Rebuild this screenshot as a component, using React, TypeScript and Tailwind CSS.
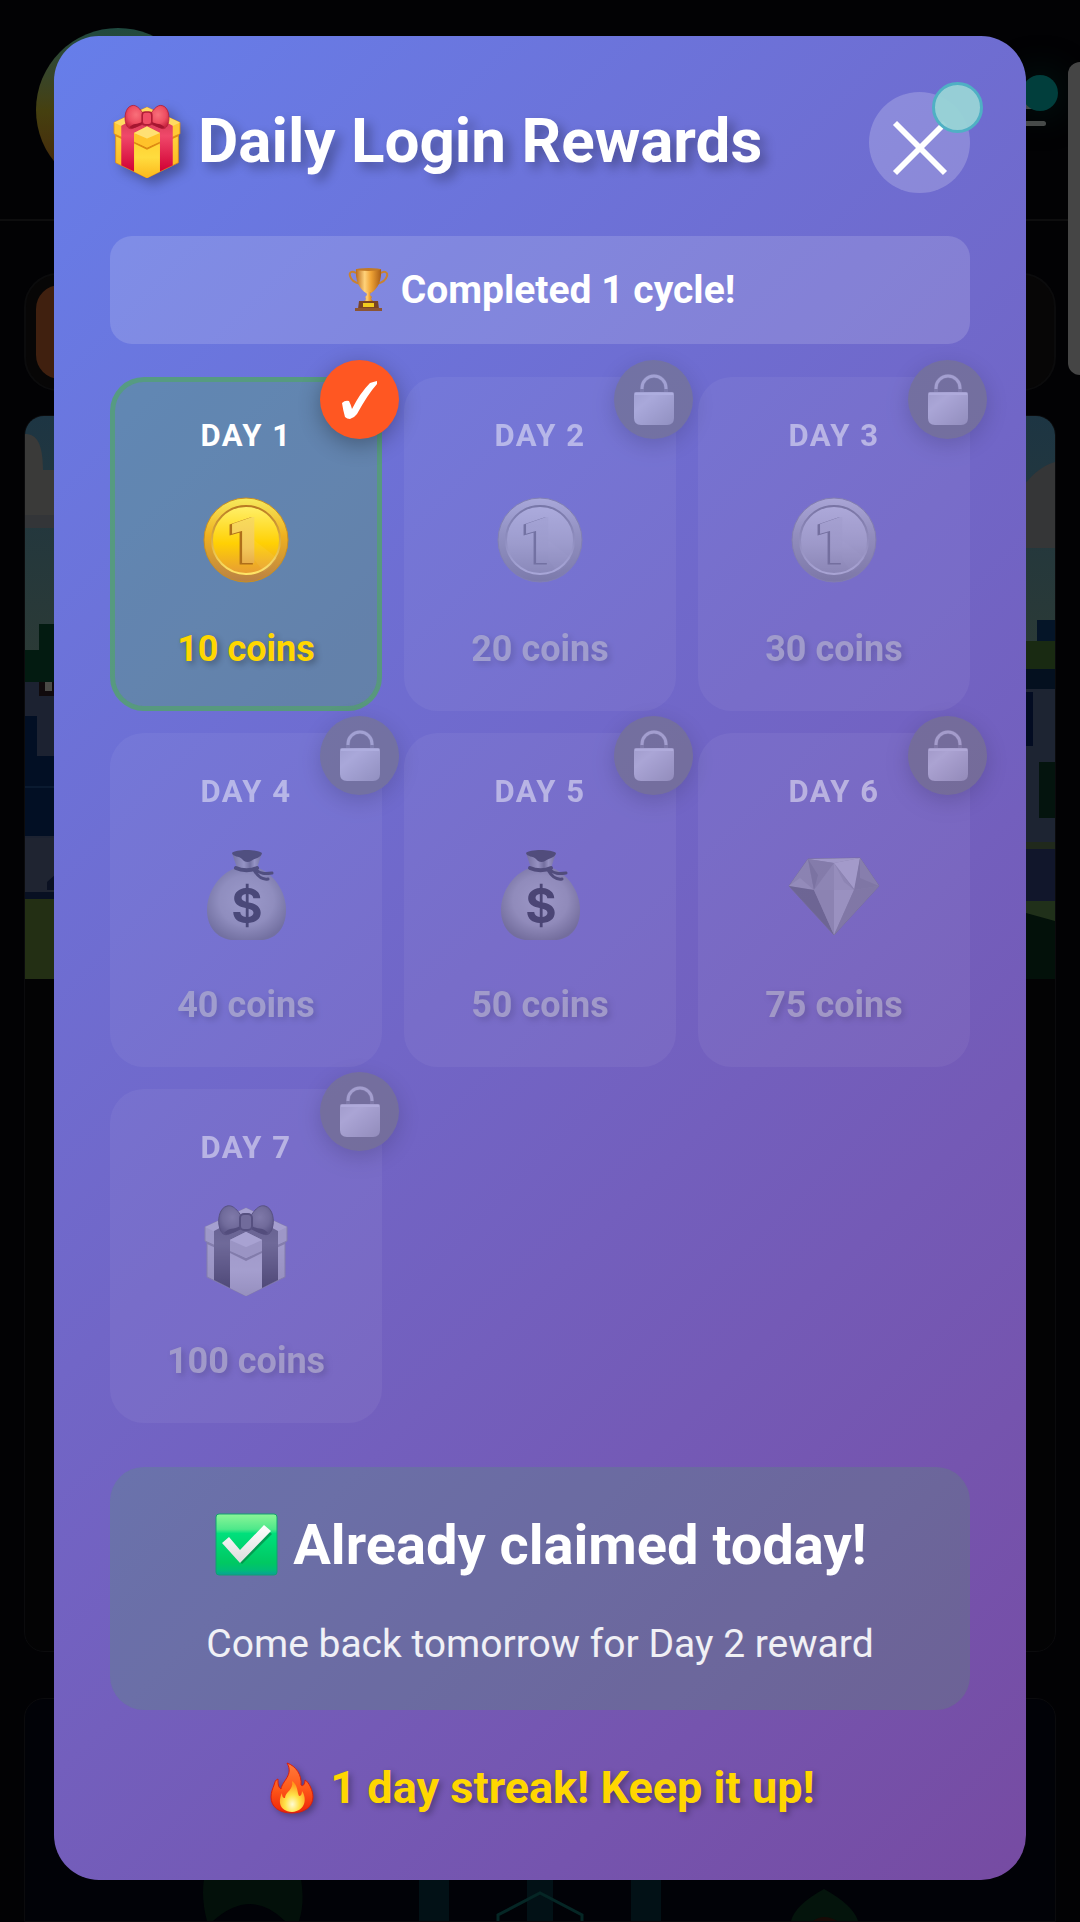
import { X } from "lucide-react";
import type { ReactNode } from "react";

type RewardIcon = "coin" | "bag" | "diamond" | "gift";

interface Reward {
    day: number;
    coins: number;
    icon: RewardIcon;
    claimed: boolean;
}

const REWARDS: Reward[] = [
    { day: 1, coins: 10, icon: "coin", claimed: true },
    { day: 2, coins: 20, icon: "coin", claimed: false },
    { day: 3, coins: 30, icon: "coin", claimed: false },
    { day: 4, coins: 40, icon: "bag", claimed: false },
    { day: 5, coins: 50, icon: "bag", claimed: false },
    { day: 6, coins: 75, icon: "diamond", claimed: false },
    { day: 7, coins: 100, icon: "gift", claimed: false },
];

function GiftIcon({ className }: { className: string }) {
    return (
        <svg viewBox="0 0 92 92" className={className} aria-hidden="true">
            <defs>
                <linearGradient id="giftBox" x1="0" y1="0" x2="0" y2="1">
                    <stop offset="0" stopColor="#ffe04a" />
                    <stop offset="1" stopColor="#fbb118" />
                </linearGradient>
                <linearGradient id="giftFront" x1="0" y1="0" x2="0" y2="1">
                    <stop offset="0" stopColor="#ffc928" />
                    <stop offset="0.6" stopColor="#ffdc3e" />
                    <stop offset="1" stopColor="#fcb81c" />
                </linearGradient>
                <linearGradient id="giftRibbon" x1="0" y1="0" x2="0" y2="1">
                    <stop offset="0" stopColor="#c9364a" />
                    <stop offset="0.4" stopColor="#f0486a" />
                    <stop offset="1" stopColor="#d10034" />
                </linearGradient>
                <radialGradient id="giftBow" cx="0.5" cy="0.4" r="0.6">
                    <stop offset="0" stopColor="#f9707a" />
                    <stop offset="0.6" stopColor="#ee4e62" />
                    <stop offset="1" stopColor="#c9243f" />
                </radialGradient>
            </defs>
            <path d="M7 36V73L46 92L85 73V36L46 20Z" fill="url(#giftBox)" stroke="#dd8a14" strokeWidth="1" />
            <path d="M7 40L46 58L85 40V36L46 20L7 36Z" fill="#e38c12" />
            <path d="M5 23L46 4L87 23V37L46 56L5 37Z" fill="#ffc935" stroke="#e08e16" strokeWidth="1" />
            <path d="M5 23L46 4L87 23L46 43Z" fill="#ffdb63" />
            <path d="M14 27L46 10L78 27V76L62 84V36L46 28L30 36V84L14 76Z" fill="url(#giftRibbon)" />
            <path d="M30 36L46 28L62 36V84L46 92L30 84Z" fill="url(#giftFront)" />
            <path d="M30 49L46 57L62 49V46L46 54L30 46Z" fill="#dd8a12" />
            <path d="M30 36L46 43L62 36V47L46 54L30 47Z" fill="#ffc22a" />
            <path d="M30 36L46 28L62 36L46 43Z" fill="#ffe074" />
            <path d="M46 20C40 9 34 0 27 2C19 4 17 17 20 25C22 31 26 32 31 29C37 26 40 27 46 20Z" fill="url(#giftBow)" stroke="#b01c36" strokeWidth="1" />
            <path d="M46 20C52 9 58 0 65 2C73 4 75 17 72 25C70 31 66 32 61 29C55 26 52 27 46 20Z" fill="url(#giftBow)" stroke="#b01c36" strokeWidth="1" />
            <path d="M24 29C29 23 34 26 40 22V25C35 28 29 32 24 29Z" fill="#a51530" />
            <path d="M68 29C63 23 58 26 52 22V25C57 28 63 32 68 29Z" fill="#a51530" />
            <rect x="40" y="10" width="12" height="16" rx="4" fill="#f04d66" stroke="#b01c36" strokeWidth="2" />
        </svg>
    );
}

function CoinIcon({ className }: { className: string }) {
    return (
        <svg viewBox="0 0 92 92" className={className} aria-hidden="true">
            <defs>
                <linearGradient id="coinRim" x1="0" y1="0" x2="0" y2="1">
                    <stop offset="0" stopColor="#f7ea5c" />
                    <stop offset="0.45" stopColor="#efb01f" />
                    <stop offset="1" stopColor="#b98145" />
                </linearGradient>
                <linearGradient id="coinFace" x1="0" y1="0" x2="0" y2="1">
                    <stop offset="0" stopColor="#fff06a" />
                    <stop offset="0.55" stopColor="#ffd004" />
                    <stop offset="1" stopColor="#e79c35" />
                </linearGradient>
                <linearGradient id="coinEdge" x1="0" y1="0" x2="0" y2="1">
                    <stop offset="0" stopColor="#b97a22" />
                    <stop offset="1" stopColor="#ffe566" />
                </linearGradient>
                <linearGradient id="coinDigit" x1="0" y1="0" x2="0" y2="1">
                    <stop offset="0" stopColor="#fbe45c" />
                    <stop offset="0.6" stopColor="#f3c75a" />
                    <stop offset="1" stopColor="#dd9838" />
                </linearGradient>
            </defs>
            <circle cx="46" cy="48" r="42" fill="url(#coinRim)" stroke="#c98f22" strokeWidth="1" />
            <circle cx="46" cy="48" r="34" fill="url(#coinFace)" stroke="url(#coinEdge)" strokeWidth="2" />
            <path d="M54 48L77 66A38 38 0 0 1 64 80L48 60Z" fill="#fff" opacity="0.06" />
            <text x="44" y="71" textAnchor="middle" fontSize="62" fontWeight="900" fill="#b06f1a" stroke="#b06f1a" strokeWidth="3">1</text>
            <text x="46" y="70" textAnchor="middle" fontSize="62" fontWeight="900" fill="url(#coinDigit)" stroke="url(#coinDigit)" strokeWidth="2">1</text>
        </svg>
    );
}

function BagIcon({ className }: { className: string }) {
    return (
        <svg viewBox="0 0 92 92" className={className} aria-hidden="true">
            <defs>
                <radialGradient id="bagBody" cx="0.5" cy="0.45" r="0.58">
                    <stop offset="0" stopColor="#c8c8c8" />
                    <stop offset="0.6" stopColor="#b0b0b0" />
                    <stop offset="1" stopColor="#767676" />
                </radialGradient>
                <linearGradient id="bagNeck" x1="0" y1="0" x2="1" y2="0">
                    <stop offset="0" stopColor="#777" />
                    <stop offset="0.4" stopColor="#bbb" />
                    <stop offset="0.6" stopColor="#777" />
                    <stop offset="0.75" stopColor="#bbb" />
                    <stop offset="1" stopColor="#777" />
                </linearGradient>
            </defs>
            <path d="M36 20C20 25 7 43 7 62C7 78 16 90 31 92H63C78 90 86 78 86 62C86 43 73 25 58 20Z" fill="url(#bagBody)" />
            <path d="M32 5L37 20H57L62 5Z" fill="url(#bagNeck)" />
            <path d="M32 5C35 1 58 1 62 5C61 10 55 10 51 13C48 15 44 14 42 11C39 8 33 9 32 5Z" fill="#333" />
            <path d="M36 20C42 23 51 23 57 20" fill="none" stroke="#333" strokeWidth="4" strokeLinecap="round" />
            <path d="M55 21C60 26 65 26 72 25M54 22C58 29 62 32 68 31" fill="none" stroke="#333" strokeWidth="3" strokeLinecap="round" />
            <text x="47" y="75" textAnchor="middle" fontSize="48" fontWeight="700" fill="#262626" className="font-[Inter,sans-serif]">$</text>
        </svg>
    );
}

function DiamondIcon({ className }: { className: string }) {
    return (
        <svg viewBox="0 0 92 92" className={className} aria-hidden="true">
            <path d="M20 11L72 10L91 38L46 87L1 38Z" fill="#9a9a9a" stroke="#787878" strokeWidth="1" />
            <path d="M20 11L46 15L72 10Z" fill="#cfcfcf" />
            <path d="M20 11L1 38L26 42Z" fill="#a4a4a4" />
            <path d="M1 38L12 30L26 42Z" fill="#b5b5b5" />
            <path d="M20 11L46 15L37 30L26 42Z" fill="#969696" />
            <path d="M20 11L30 27L26 42Z" fill="#858585" />
            <path d="M46 15L26 42H66Z" fill="#a9a9a9" />
            <path d="M46 15L72 10L67 42Z" fill="#d4d4d4" />
            <path d="M46 15L56 34L66 42L46 42Z" fill="#bababa" />
            <path d="M72 10L91 38L66 42Z" fill="#8c8c8c" />
            <path d="M72 10L72 30L91 38Z" fill="#9c9c9c" />
            <path d="M1 38L26 42L46 87Z" fill="#6a6a6a" />
            <path d="M26 42H46V87Z" fill="#a6a6a6" />
            <path d="M46 42H66L46 87Z" fill="#c2c2c2" />
            <path d="M66 42L91 38L46 87Z" fill="#8f8f8f" />
        </svg>
    );
}

function LockIcon() {
    return (
        <svg viewBox="0 0 40 52" className="h-[52px] w-10" aria-hidden="true">
            <defs>
                <linearGradient id="lockBody" x1="0" y1="0" x2="1" y2="1">
                    <stop offset="0" stopColor="#d2d2d2" />
                    <stop offset="0.3" stopColor="#e4e4e4" />
                    <stop offset="1" stopColor="#b4b4b4" />
                </linearGradient>
            </defs>
            <path d="M8 18V14A12 12 0 0 1 32 14V18" fill="none" stroke="#8c8c8c" strokeWidth="4" />
            <path d="M8 15V14A12 12 0 0 1 32 14V15" fill="none" stroke="#d6d6d6" strokeWidth="3" />
            <path d="M0 20Q0 18 2 18H38Q40 18 40 20V44Q40 51 33 51H7Q0 51 0 44Z" fill="url(#lockBody)" />
            <path d="M1 19H39V21H1Z" fill="#eee" />
        </svg>
    );
}

function TickIcon() {
    return (
        <svg viewBox="0 0 36 38" className="h-[38px] w-9" aria-hidden="true">
            <path d="M0 22Q3 19 7 20Q9 24 10 28Q18 12 28 2Q31 1 35 0L35 3Q26 13 15 33Q12 37 8 38Q5 38 3 36Q1 29 0 22Z" fill="#fff" />
        </svg>
    );
}

function TrophyIcon() {
    return (
        <svg viewBox="0 0 46 46" className="size-[46px]" aria-hidden="true">
            <defs>
                <linearGradient id="cup" x1="0" y1="0" x2="1" y2="0">
                    <stop offset="0" stopColor="#b96a1c" />
                    <stop offset="0.35" stopColor="#ffd27a" />
                    <stop offset="0.6" stopColor="#f0a334" />
                    <stop offset="1" stopColor="#a65c16" />
                </linearGradient>
            </defs>
            <path d="M11 6C6 3 4 6 5 9C6 13 10 16 16 17M36 6C40 3 43 6 42 9C41 13 37 16 31 17" fill="none" stroke="#c98230" strokeWidth="2" />
            <path d="M11 2H36C37 13 33 22 26 26H21C14 22 10 13 11 2Z" fill="url(#cup)" />
            <ellipse cx="23.500" cy="2.500" rx="12.500" ry="1.500" fill="#c27a26" />
            <path d="M21 25H26L25 28L27 30L26 32L29 35H18L21 32L20 30L22 28Z" fill="url(#cup)" />
            <path d="M14 34H33L34 42H13Z" fill="#7b4423" />
            <rect x="18" y="36" width="11" height="4" fill="#f2cb1e" />
            <path d="M10 41H37V44H10Z" fill="#8c5533" />
        </svg>
    );
}

function CheckBoxIcon() {
    return (
        <svg viewBox="0 0 67 67" className="size-[67px]" aria-hidden="true">
            <defs>
                <linearGradient id="checkBox" x1="0" y1="0" x2="0" y2="1">
                    <stop offset="0" stopColor="#8cf598" />
                    <stop offset="0.25" stopColor="#4ee88a" />
                    <stop offset="0.32" stopColor="#00e07c" />
                    <stop offset="0.8" stopColor="#00c862" />
                    <stop offset="0.92" stopColor="#00bd76" />
                    <stop offset="1" stopColor="#0a9f98" />
                </linearGradient>
                <linearGradient id="checkMark" x1="0" y1="0" x2="0" y2="1">
                    <stop offset="0" stopColor="#fff" />
                    <stop offset="1" stopColor="#dcdcdc" />
                </linearGradient>
            </defs>
            <rect x="3" y="3" width="61" height="61" rx="3" fill="url(#checkBox)" stroke="#12a070" strokeWidth="1" />
            <path d="M11 34L17 30L28 43L53 18L59 23L29 53Z" fill="#04793f" opacity="0.6" />
            <path d="M9 32L16 26L27 39L51 14L58 20L27 52Z" fill="url(#checkMark)" />
        </svg>
    );
}

function FireIcon() {
    return (
        <svg viewBox="0 0 54 54" className="size-[54px] drop-shadow-[3px_3px_3px_rgba(0,0,0,0.3)]" aria-hidden="true">
            <defs>
                <linearGradient id="flame" x1="0" y1="0" x2="0" y2="1">
                    <stop offset="0" stopColor="#ff7a3c" />
                    <stop offset="0.5" stopColor="#ff5a1a" />
                    <stop offset="1" stopColor="#ee2408" />
                </linearGradient>
                <radialGradient id="flameCore" cx="0.5" cy="0.75" r="0.65">
                    <stop offset="0" stopColor="#fffbd2" />
                    <stop offset="0.45" stopColor="#ffe34a" />
                    <stop offset="1" stopColor="#ff9a1c" />
                </radialGradient>
            </defs>
            <path d="M22 2C31 5 37 14 36 24C38 26 40 23 40 19C44 21 48 30 48 36C48 46 39 52 27 52C14 52 6 46 6 36C6 31 8 27 9 24C10 21 10 19 13 18C13 23 13 26 16 28C17 20 29 14 22 2Z" fill="url(#flame)" stroke="#d81f0c" strokeWidth="1" />
            <path d="M27 20C33 24 32 31 34 35C36 35 37 33 37 30C42 37 41 50 27 51C14 50 13 40 17 32C17 36 18 37 20 37C20 31 29 29 27 20Z" fill="url(#flameCore)" />
        </svg>
    );
}

function RewardArt({ icon }: { icon: RewardIcon }) {
    if (icon === "coin") return <CoinIcon className="size-[92px]" />;
    if (icon === "bag") return <BagIcon className="size-[92px]" />;
    if (icon === "diamond") return <DiamondIcon className="size-[92px]" />;
    return <GiftIcon className="size-[92px]" />;
}

function Badge({ className, children }: { className: string; children: ReactNode }) {
    return (
        <span
            className={`absolute -top-[22px] -right-[22px] flex size-[79px] items-center justify-center rounded-full shadow-[0_6px_22px_rgba(0,0,0,0.3)] ${className}`}
        >
            {children}
        </span>
    );
}

function RewardCard({ reward }: { reward: Reward }) {
    return (
        <li
            className={`relative flex flex-col items-center rounded-[34px] border-[5px] py-9 ${reward.claimed ? "border-[#4caf50]/50 bg-[#4caf50]/30" : "border-transparent bg-white/10 opacity-50 grayscale"}`}
        >
            <h3 className="text-[31px] leading-9 font-bold tracking-wider text-white">DAY {reward.day}</h3>
            <div className="mt-[38px]">
                <RewardArt icon={reward.icon} />
            </div>
            <p className="mt-11 text-[36px] leading-[42px] font-bold text-[#ffd700] [text-shadow:3px_3px_6px_rgba(0,0,0,0.3)]">
                {reward.coins} coins
            </p>
            {reward.claimed ? (
                <Badge className="bg-[#ff5722]">
                    <TickIcon />
                </Badge>
            ) : (
                <Badge className="bg-[#777]">
                    <LockIcon />
                </Badge>
            )}
        </li>
    );
}

/* Dimmed game page that stays visible around the dialog */
function GameBackdrop() {
    return (
        <div className="absolute inset-0 flex flex-col overflow-hidden bg-[#020204]" aria-hidden="true">
            <div className="flex h-[221px] items-start justify-between border-b-2 border-[#0d0d0e] px-9 pt-7">
                <div className="size-[164px] rounded-full bg-linear-to-b from-[#1f4a40] via-[#45400f] to-[#45200a]" />
                <div className="relative mt-[76px] -mr-0.5 flex w-14 flex-col gap-3">
                    <span className="h-[5px] rounded-full bg-[#4a4a4a]" />
                    <span className="h-[5px] rounded-full bg-[#4a4a4a]" />
                    <span className="absolute -top-[29px] -right-3 size-9 rounded-full bg-[#013e3c] shadow-[0_0_40px_rgba(0,90,70,0.35)]" />
                </div>
            </div>
            <div className="mx-6 mt-[52px] flex h-[118px] rounded-[34px] border-2 border-[#0b0b0c] bg-[#070606] p-2.5">
                <div className="w-40 rounded-3xl bg-[#40200f]" />
            </div>
            <div className="mx-6 mt-6 h-[1237px] overflow-hidden rounded-[20px] border border-[#0b0b0d] bg-[#030304]">
                <svg viewBox="0 0 1030 563" preserveAspectRatio="none" className="h-[563px] w-full">
                    <defs>
                        <linearGradient id="sky" x1="0" y1="0" x2="0" y2="1">
                            <stop offset="0" stopColor="#1d3543" />
                            <stop offset="1" stopColor="#2b3a36" />
                        </linearGradient>
                    </defs>
                    <rect width="1030" height="240" fill="url(#sky)" />
                    <path d="M0 18C12 18 18 28 18 54H40V112H0Z" fill="#3a3a39" />
                    <path d="M0 99H40V112H0Z" fill="#333538" />
                    <path d="M990 76C1000 72 1008 52 1030 46V132H990Z" fill="#353637" />
                    <path d="M0 234H14V208H40V268H0Z" fill="#031b11" />
                    <rect y="266" width="40" height="156" fill="#1c2231" />
                    <rect x="14" y="266" width="26" height="14" fill="#100a0c" />
                    <rect x="20" y="266" width="7" height="9" fill="#4a4a46" />
                    <path d="M0 300H12V340H40V420H0Z" fill="#020f24" />
                    <rect y="370" width="40" height="2" fill="#0a1a30" />
                    <rect y="422" width="40" height="56" fill="#1f2431" />
                    <path d="M40 450L22 466V474H40Z" fill="#0b1122" />
                    <rect y="476" width="40" height="7" fill="#081022" />
                    <rect y="483" width="40" height="80" fill="#232f14" />
                    <rect x="1012" y="204" width="18" height="22" fill="#051528" />
                    <rect x="990" y="225" width="40" height="28" fill="#192a12" />
                    <rect x="990" y="253" width="40" height="20" fill="#04101f" />
                    <rect x="990" y="273" width="40" height="155" fill="#1d2432" />
                    <rect x="990" y="276" width="18" height="54" fill="#030c22" />
                    <rect x="1014" y="346" width="16" height="56" fill="#04140e" />
                    <rect x="990" y="426" width="40" height="7" fill="#20291c" />
                    <rect x="990" y="433" width="40" height="52" fill="#11162b" />
                    <rect x="990" y="485" width="40" height="78" fill="#20301a" />
                    <path d="M990 494L1030 505V563H990Z" fill="#03110a" />
                </svg>
            </div>
            <div className="mx-6 mt-[46px] flex min-h-0 flex-1 flex-col justify-end overflow-hidden rounded-t-[20px] border border-[#0b0b0d] bg-[#010207]">
                <svg viewBox="0 0 1030 42" preserveAspectRatio="none" className="h-[42px] w-full">
                    <path d="M179 0H276Q280 24 274 42H260Q226 8 188 42H182Q176 20 179 0Z" fill="#03100a" />
                    <rect x="394" width="30" height="42" fill="#021116" />
                    <rect x="502" width="26" height="42" fill="#021116" />
                    <rect x="606" width="30" height="42" fill="#021116" />
                    <path d="M473 42V36L515 14L557 36V42" fill="none" stroke="#052625" strokeWidth="3" />
                    <path d="M766 42Q770 26 799 10Q828 26 833 42Z" fill="#04140c" />
                    <path d="M788 42Q799 34 812 42Z" fill="#180a06" />
                </svg>
            </div>
            <div className="absolute top-[62px] -right-5 h-[313px] w-8 rounded-xl bg-[#454545]" />
        </div>
    );
}

export default function App() {
    return (
        <div className="relative min-h-screen bg-black px-[54px] pt-9 pb-10 font-[Roboto,sans-serif]">
            <GameBackdrop />
            <section
                role="dialog"
                aria-labelledby="rewards-title"
                className="relative rounded-[45px] bg-linear-135 from-[#667eea] to-[#764ba2] px-14 pt-14 pb-[65px] text-white"
            >
                <header className="mb-[43px] flex items-center justify-between">
                    <h1
                        id="rewards-title"
                        className="flex items-center gap-3.5 pb-1 text-[62px] leading-[72px] font-bold [text-shadow:6px_6px_11px_rgba(0,0,0,0.3)]"
                    >
                        <GiftIcon className="size-[74px] drop-shadow-[6px_6px_6px_rgba(0,0,0,0.3)]" />
                        Daily Login Rewards
                    </h1>
                    <button
                        type="button"
                        aria-label="Close"
                        className="relative flex size-[101px] items-center justify-center rounded-full bg-white/20 pt-2.5"
                    >
                        <X className="size-[100px]" strokeWidth={1.4} strokeLinecap="butt" />
                        <span className="absolute -top-2.5 -right-[13px] size-[51px] rounded-full border-[3px] border-[#4fb0c4] bg-[#98d4d6]/95" />
                    </button>
                </header>

                <p className="mb-[33px] flex items-center justify-center gap-2.5 rounded-[22px] bg-white/15 py-[31px] text-[39px] leading-[46px] font-bold">
                    <TrophyIcon />
                    Completed 1 cycle!
                </p>

                <ul className="grid grid-cols-3 gap-[22px]">
                    {REWARDS.map((reward) => (
                        <RewardCard key={reward.day} reward={reward} />
                    ))}
                </ul>

                <div className="mt-11 rounded-[34px] bg-[#4caf50]/20 pt-11 pb-[43px] text-center">
                    <h2 className="flex items-center justify-center gap-[13px] text-[56px] leading-[66px] font-bold">
                        <CheckBoxIcon />
                        Already claimed today!
                    </h2>
                    <p className="mt-[43px] text-[39px] leading-[46px] text-white/90">
                        Come back tomorrow for Day 2 reward
                    </p>
                </div>

                <p className="mt-[51px] flex items-center justify-center gap-[11px] text-[45px] leading-[52px] font-bold text-[#ffd700] [text-shadow:3px_3px_6px_rgba(0,0,0,0.3)]">
                    <FireIcon />
                    1 day streak! Keep it up!
                </p>
            </section>
        </div>
    );
}
